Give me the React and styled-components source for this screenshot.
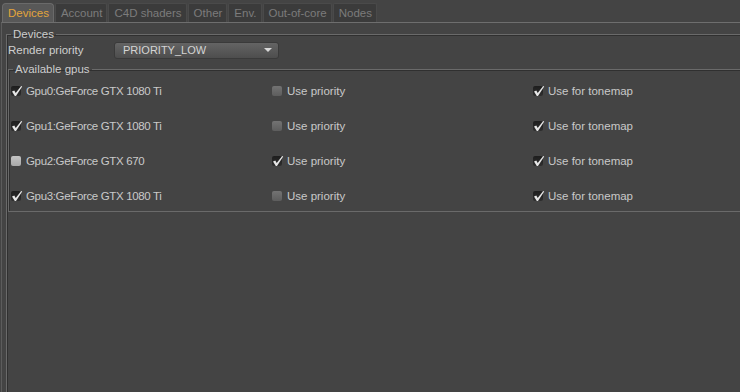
import React from 'react'
import styled, { createGlobalStyle } from 'styled-components'

const GlobalStyle = createGlobalStyle`
  body {
    margin: 0;
    background: #444444;
    font-family: "Liberation Sans", Arial, sans-serif;
    font-size: 11px;
    color: #c9c9c9;
  }
`

const Page = styled.div`
  width: 740px;
  height: 392px;
  overflow: hidden;
  background: #444444;
`

const TabBar = styled.div`
  display: flex;
  height: 19px;
  padding: 3px 0 0 2px;
`

const Tab = styled.div`
  display: flex;
  align-items: center;
  padding: 0 4px 0 5px;
  height: 19px;
  box-sizing: border-box;
  margin-right: 1px;
  border: 1px solid ${(props) => (props.active ? '#6a6a6a' : '#4a4a4a')};
  border-bottom: none;
  border-radius: ${(props) => (props.active ? '4px 4px 0 0' : '2px 2px 0 0')};
  background: ${(props) => (props.active ? '#585858' : '#3b3b3b')};
  color: ${(props) => (props.active ? '#e3a53c' : '#7c7c7c')};
  font-size: 11.5px;
`

const Panel = styled.div`
  border-top: 1px solid #6e6e6e;
  border-left: 1px solid #5c5c5c;
  margin-left: 1px;
  height: 400px;
  padding: 5px 0 0 4px;
`

const Group = styled.fieldset`
  margin: ${(props) => props.inset || '0'};
  margin-right: -20px;
  padding: 0;
  min-width: 0;
  border: none;
  border-top: 1px solid #6a6a6a;
  border-left: 1px solid #6a6a6a;
  box-shadow: inset 1px 1px 0 #303030;
  border-bottom: ${(props) => (props.closed ? '1px solid #6a6a6a' : 'none')};
  height: ${(props) => props.h || 'auto'};

  & > legend {
    padding: 0 2px;
    margin-left: 4px;
    color: #cdcdcd;
    font-size: 11.5px;
    line-height: 13px;
  }
`

const PriorityRow = styled.div`
  display: flex;
  align-items: center;
  height: 18px;
  padding: 0 0 0 1px;
`

const Label = styled.span`
  width: 106px;
  color: #cfcfcf;
  font-size: 11.5px;
`

const Select = styled.div`
  display: flex;
  align-items: center;
  justify-content: space-between;
  width: 165px;
  height: 17px;
  box-sizing: border-box;
  padding: 0 6px 0 8px;
  border-radius: 3px;
  border: 1px solid #3a3a3a;
  background: linear-gradient(#646464, #4d4d4d);
  color: #d4d4d4;
  font-size: 11px;
`

const Arrow = styled.span`
  width: 0;
  height: 0;
  border-left: 4px solid transparent;
  border-right: 4px solid transparent;
  border-top: 4px solid #d8d8d8;
`

const GpuGrid = styled.div`
  display: grid;
  grid-template-columns: 261px 261px 261px;
  grid-auto-rows: 30px;
  row-gap: 5px;
  padding-left: 2px;
`

const Check = styled.label`
  display: flex;
  align-items: center;
  gap: 5px;
  color: #c9c9c9;
  font-size: 11.5px;
  letter-spacing: ${(props) => (props.tight ? '-0.35px' : 'normal')};
`

const Box = styled.span`
  position: relative;
  width: 10px;
  height: 10px;
  border-radius: 2px;
  background: ${(props) =>
    props.checked
      ? 'linear-gradient(#1e1e1e, #2e2e2e)'
      : props.hot
      ? 'linear-gradient(#c4c4c4, #a9a9a9)'
      : 'linear-gradient(#737373, #5d5d5d)'};

  & > svg {
    position: absolute;
    left: 0;
    top: -1px;
  }
`

const Tick = () => (
  <svg width="12" height="12" viewBox="0 0 12 12">
    <path d="M1 6.6 L3.3 5.5 L4.7 8 L10.2 1 L11.2 1.6 L5 11 L3.8 11 Z" fill="#e6e6e6" />
  </svg>
)

const CheckItem = ({ checked, hot, tight, children }) => (
  <Check tight={tight}>
    <Box checked={checked} hot={hot}>{checked && <Tick />}</Box>
    {children}
  </Check>
)

const gpus = [
  { name: 'Gpu0:GeForce GTX 1080 Ti', on: true, priority: false },
  { name: 'Gpu1:GeForce GTX 1080 Ti', on: true, priority: false },
  { name: 'Gpu2:GeForce GTX 670', on: false, priority: true, hot: true },
  { name: 'Gpu3:GeForce GTX 1080 Ti', on: true, priority: false },
]

const tabs = ['Devices', 'Account', 'C4D shaders', 'Other', 'Env.', 'Out-of-core', 'Nodes']

export default function App() {
  return (
    <Page>
      <GlobalStyle />
      <TabBar>
        {tabs.map((t, i) => (
          <Tab key={t} active={i === 0}>{t}</Tab>
        ))}
      </TabBar>
      <Panel>
        <Group h="420px">
          <legend>Devices</legend>
          <PriorityRow>
            <Label>Render priority</Label>
            <Select>
              <span>PRIORITY_LOW</span>
              <Arrow />
            </Select>
          </PriorityRow>
          <Group inset="4px 0 0 1px" closed>
            <legend>Available gpus</legend>
            <GpuGrid>
              {gpus.map((g) => (
                <React.Fragment key={g.name}>
                  <CheckItem checked={g.on} hot={g.hot} tight>{g.name}</CheckItem>
                  <CheckItem checked={g.priority}>Use priority</CheckItem>
                  <CheckItem checked>Use for tonemap</CheckItem>
                </React.Fragment>
              ))}
            </GpuGrid>
          </Group>
        </Group>
      </Panel>
    </Page>
  )
}
